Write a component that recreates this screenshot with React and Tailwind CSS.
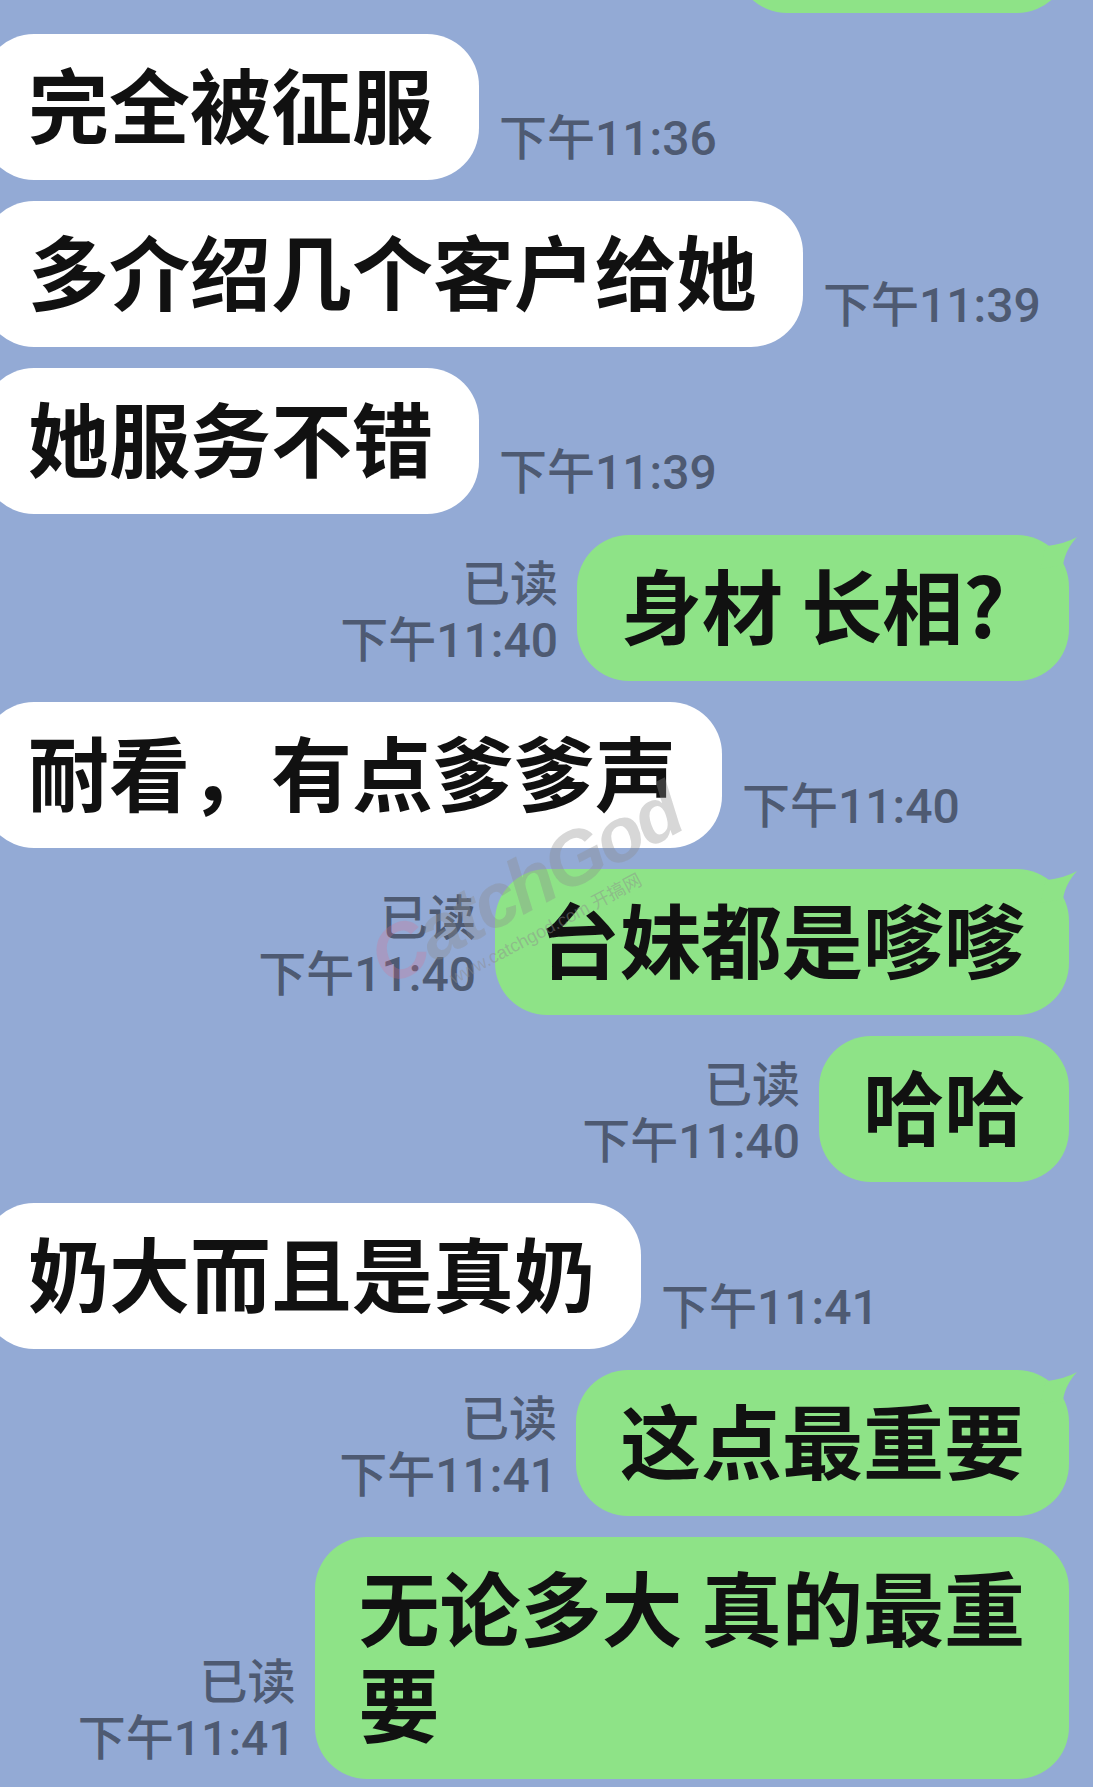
const msgFont = "font-['Noto_Sans_CJK_SC',sans-serif] font-semibold text-[81px] leading-[96px] text-[#111111]"
const timeFont = "font-['Roboto','Noto_Sans_CJK_SC',sans-serif] font-medium text-[48px] leading-[56px] text-[#4e5a72]"

function Tail() {
  return (
    <svg className="absolute -right-[11px] -top-[6px] h-[60px] w-[50px]" viewBox="0 0 50 60">
      <path d="M16 17 C28 16 40 12 47 8 C40 16 35 24 33 36 L10 40 Z" fill="#8ee387" />
    </svg>
  )
}

function Left({ text, time }) {
  return (
    <div className="flex items-end">
      <div className={`-ml-[18px] whitespace-nowrap rounded-[52px] bg-white pb-[30px] pl-[46px] pr-[46px] pt-[20px] ${msgFont}`}>
        {text}
      </div>
      <div className={`ml-[20px] whitespace-nowrap pb-[13px] ${timeFont}`}>{time}</div>
    </div>
  )
}

function Right({ text, time, tail, extra }) {
  return (
    <div className="flex items-end justify-end">
      <div className={`mr-[19px] whitespace-nowrap pb-[12px] text-right ${timeFont}`}>
        <div>已读</div>
        <div>{time}</div>
      </div>
      <div
        className={`relative whitespace-nowrap rounded-[52px] bg-[#8ee387] pb-[30px] pl-[44px] pt-[20px] ${
          extra ? 'pr-[64px]' : 'pr-[44px]'
        } ${msgFont}`}
      >
        {tail && <Tail />}
        {text}
      </div>
    </div>
  )
}

export default function App() {
  return (
    <div className="relative h-[1787px] w-[1093px] overflow-hidden bg-[#93aad5]">
      <div className="flex flex-col gap-[21px] pr-[24px]">
        <div className="flex justify-end">
          <div className="-mt-[133px] h-[146px] w-[334px] rounded-[52px] bg-[#8ee387]" />
        </div>
        <Left text="完全被征服" time="下午11:36" />
        <Left text="多介绍几个客户给她" time="下午11:39" />
        <Left text="她服务不错" time="下午11:39" />
        <Right text="身材 长相?" time="下午11:40" tail extra />
        <Left text="耐看，有点爹爹声" time="下午11:40" />
        <Right text="台妹都是嗲嗲" time="下午11:40" tail />
        <Right text="哈哈" time="下午11:40" />
        <Left text="奶大而且是真奶" time="下午11:41" />
        <Right text="这点最重要" time="下午11:41" tail />
        <Right
          text={
            <>
              无论多大 真的最重
              <br />要
            </>
          }
          time="下午11:41"
        />
      </div>

      {/* watermark */}
      <div className="pointer-events-none absolute left-[380px] top-[925px] origin-left -rotate-[28deg] select-none">
        <div className="font-['Liberation_Sans',sans-serif] text-[76px] font-bold italic leading-none tracking-[-3px] text-[#8c8c8c]/35">
          <span className="text-[#e06a8a]/25">C</span>atchGod
        </div>
        <div className="ml-[60px] mt-[2px] font-['Liberation_Sans','Noto_Sans_CJK_SC',sans-serif] text-[18px] leading-none text-[#8c8c8c]/45">
          www.catchgod.com 开搞网
        </div>
      </div>
    </div>
  )
}
